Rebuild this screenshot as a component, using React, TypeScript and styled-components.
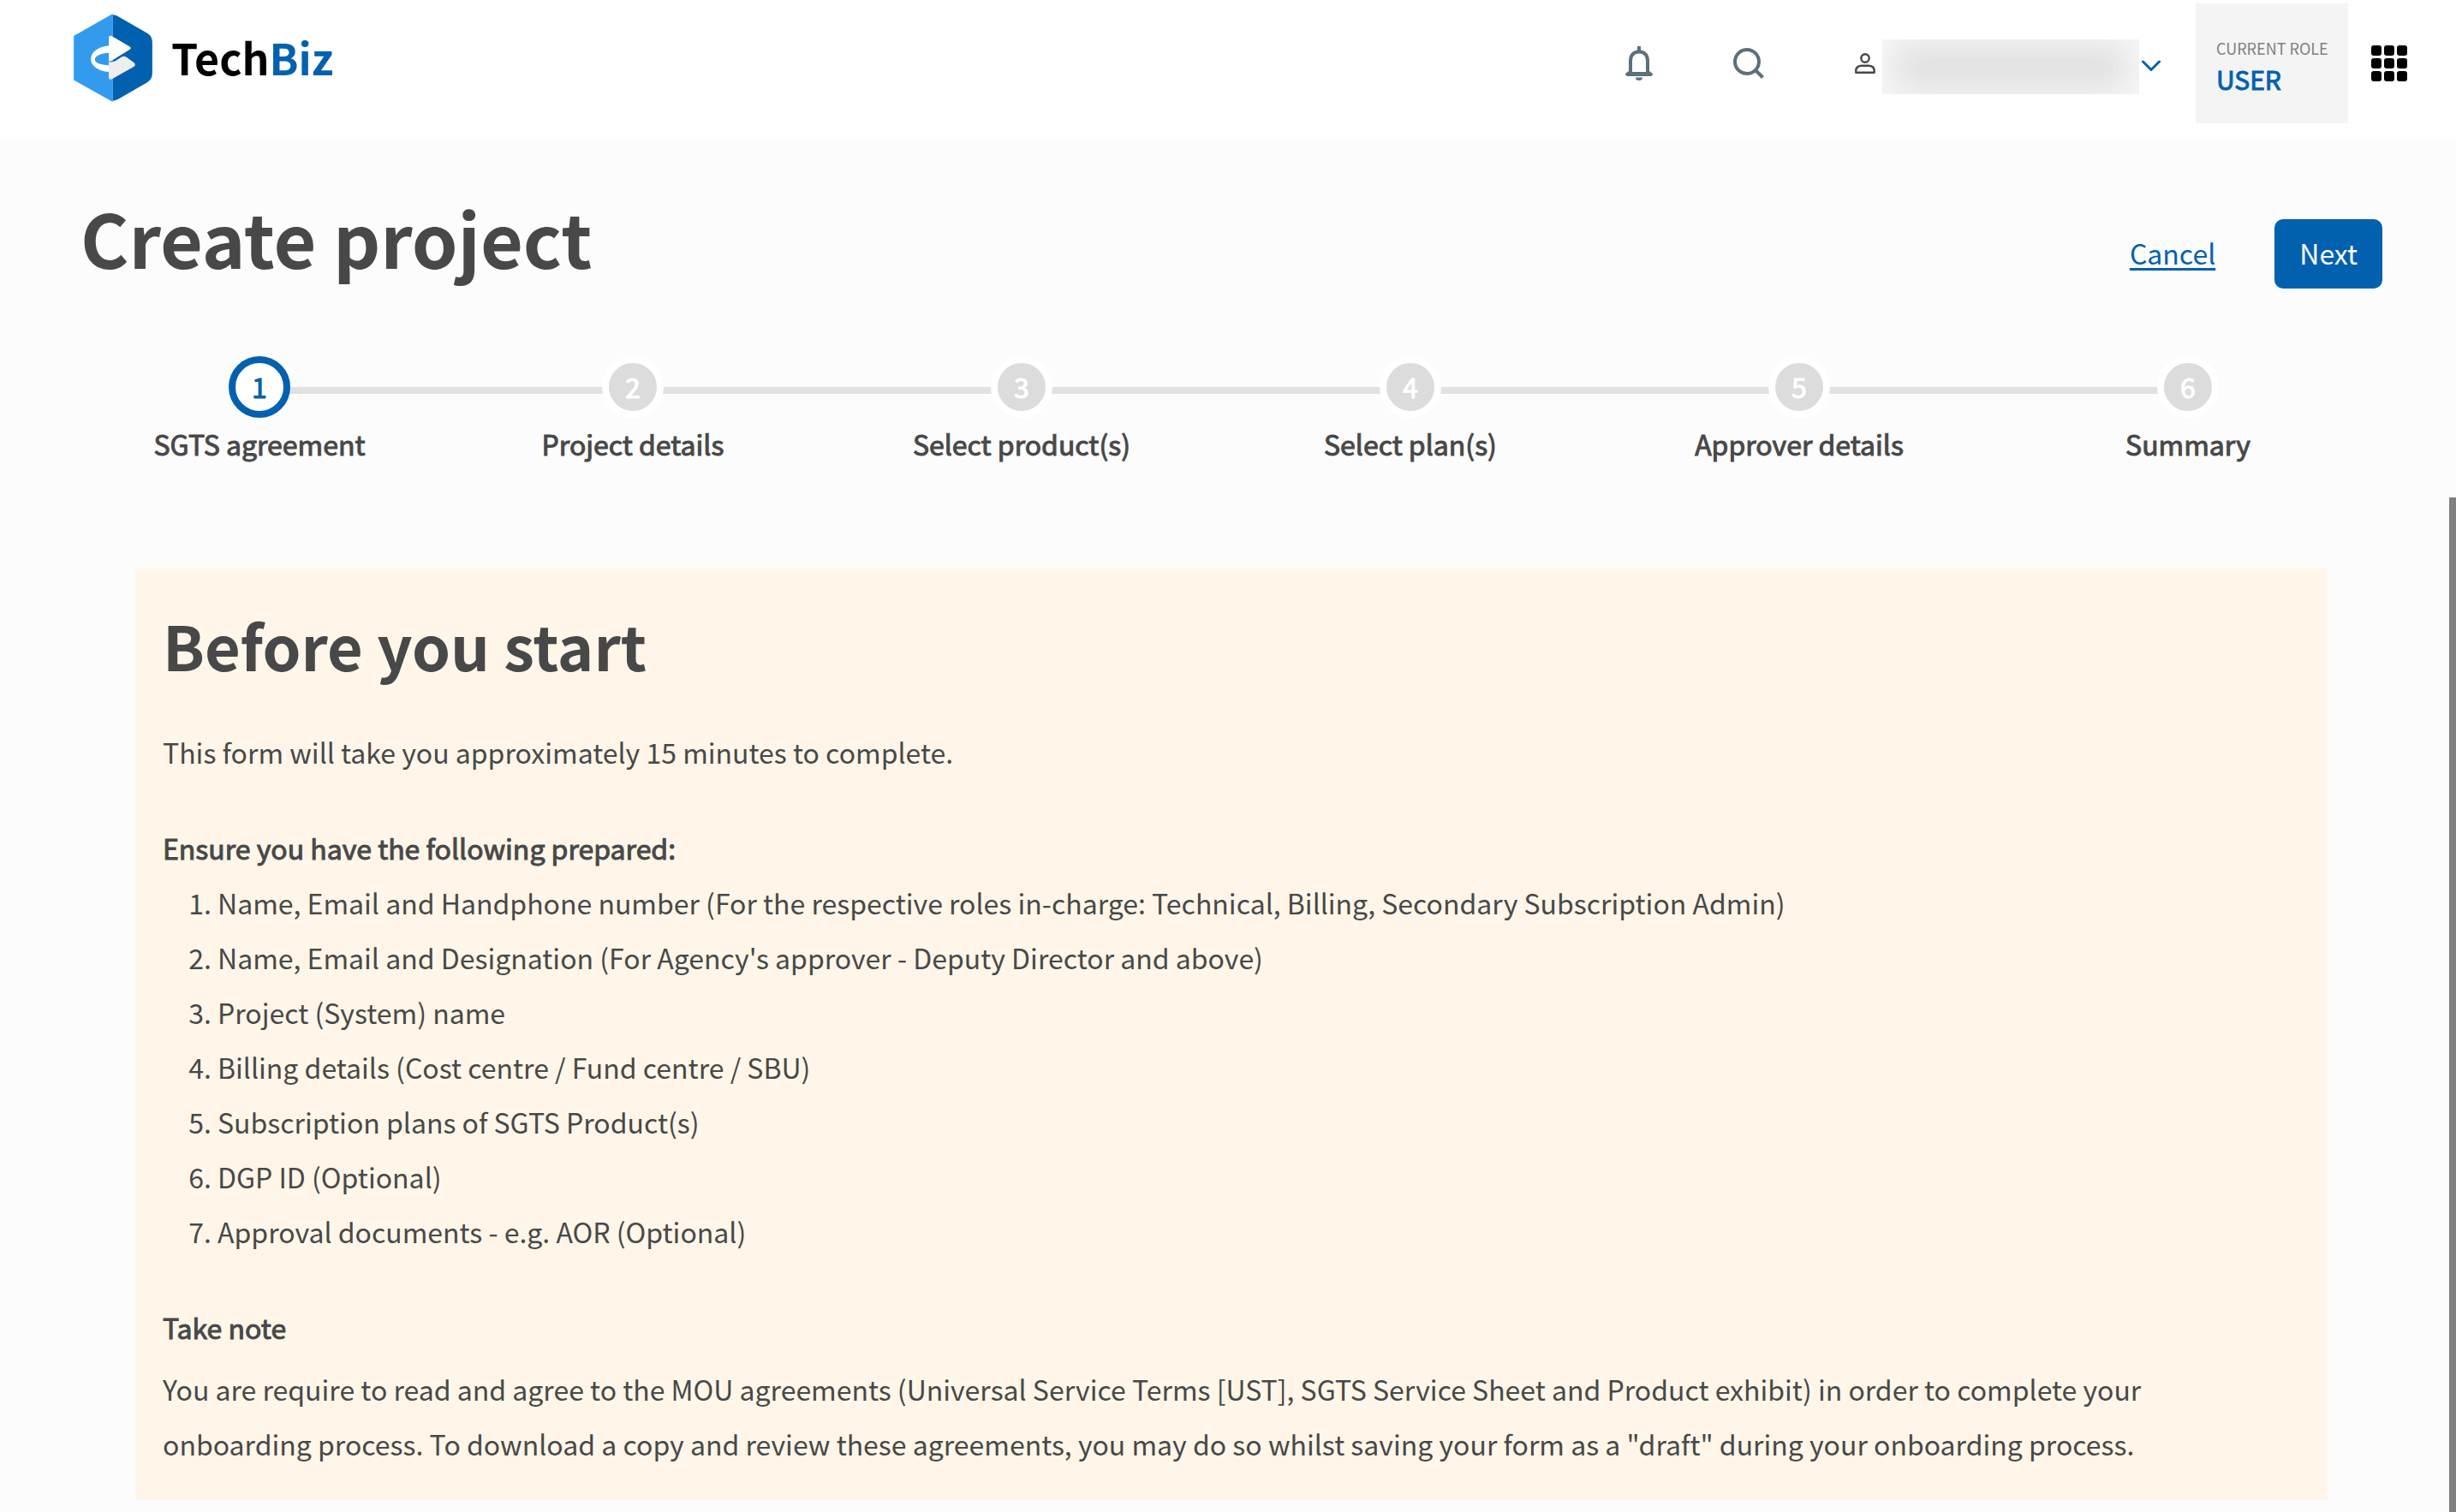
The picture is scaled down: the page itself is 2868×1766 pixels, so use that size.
import React from "react";
import styled, { createGlobalStyle, css } from "styled-components";

const blue = "#0161af";
const ink = "#484848";

const GlobalStyle = createGlobalStyle`
  *, *::before, *::after { box-sizing: border-box; }
  body {
    margin: 0;
    background: #fcfcfc;
    color: ${ink};
    font-family: "Noto Sans CJK SC", "Noto Sans", sans-serif;
    font-size: 32px;
    line-height: 64px;
  }
  h1, h2, p, ol { margin: 0; padding: 0; }
  button, a { font: inherit; color: inherit; }
  svg { display: block; }
`;

/* Thickens the regular cut, keeping its letter widths. */
const semiBold = css`
  font-weight: 400;
  -webkit-text-stroke: 1px currentColor;
`;

const Page = styled.div`
  position: relative;
  min-height: 100vh;
`;

const Header = styled.header`
  display: flex;
  align-items: center;
  justify-content: space-between;
  padding: 4px 57px 16px 86px;
  background: #fff;
`;

const Brand = styled.a`
  display: flex;
  align-self: flex-start;
  align-items: center;
  gap: 22px;
  margin-top: 12px;
  color: #000;
  font-size: 50px;
  font-weight: 700;
  text-decoration: none;
`;

const BrandName = styled.span`
  padding-bottom: 4px;
`;

const BrandAccent = styled.span`
  color: ${blue};
`;

const Tools = styled.div`
  display: flex;
  align-items: center;
`;

const IconButton = styled.button<{ $gap: number }>`
  display: flex;
  margin: 0 ${(p) => p.$gap}px 0 0;
  padding: 0;
  border: 0;
  background: none;
  cursor: pointer;
`;

const Account = styled.button`
  display: flex;
  align-items: center;
  margin: 0 41px 0 0;
  padding: 0;
  border: 0;
  background: none;
  cursor: pointer;
`;

const HiddenName = styled.span`
  width: 300px;
  height: 64px;
  margin: 8px 3px 0 8px;
  overflow: hidden;
  background: #f6f6f6;

  &::before {
    content: "";
    display: block;
    height: 48px;
    margin: 8px 16px;
    background: #dfdfdf;
    filter: blur(18px);
  }
`;

const Role = styled.div`
  display: flex;
  flex-direction: column;
  justify-content: center;
  width: 178px;
  height: 140px;
  margin-right: 27px;
  padding: 4px 0 0 24px;
  background: #f4f4f4;
  white-space: nowrap;
`;

const RoleLabel = styled.span`
  color: #808080;
  font-size: 18px;
  line-height: 32px;
`;

const RoleName = styled.span`
  color: ${blue};
  font-size: 30px;
  line-height: 40px;
  ${semiBold}
`;

const Main = styled.main`
  padding: 56px 86px 14px 94px;
`;

const TitleRow = styled.div`
  display: flex;
  align-items: flex-start;
  justify-content: space-between;
`;

const Title = styled.h1`
  font-size: 86px;
  font-weight: 700;
  line-height: 122px;
`;

const Actions = styled.div`
  display: flex;
  align-items: baseline;
  gap: 69px;
  margin-top: 40px;
`;

const CancelLink = styled.a`
  color: ${blue};
  text-decoration-thickness: 3px;
  text-underline-offset: 4px;
`;

const NextButton = styled.button`
  height: 81px;
  padding: 0 29px 4px;
  border: 0;
  border-radius: 10px;
  background: ${blue};
  color: #fff;
  cursor: pointer;
`;

const Stepper = styled.ol`
  display: flex;
  margin-top: 78px;
  list-style: none;
`;

const Step = styled.li`
  flex: 1 1 36px;
  text-align: center;

  &:first-child {
    flex-basis: 0;
  }
`;

const Track = styled.div`
  display: flex;
  align-items: center;
`;

const Line = styled.span<{ $shown: boolean }>`
  flex: 1;
  height: 8px;
  margin: 8px -2px 0;
  background: ${(p) => (p.$shown ? "#dfe1e2" : "transparent")};
`;

const Circle = styled.span<{ $active: boolean }>`
  z-index: 1;
  display: flex;
  align-items: center;
  justify-content: center;
  width: 72px;
  height: 72px;
  padding-bottom: 2px;
  border: 8px solid ${(p) => (p.$active ? blue : "#fff")};
  border-radius: 50%;
  background: ${(p) => (p.$active ? "#fff" : "#dcdcdc")};
  color: ${(p) => (p.$active ? blue : "#fff")};
  ${semiBold}
`;

const StepLabel = styled.div`
  margin-top: 6px;
  line-height: 48px;
  ${semiBold}
`;

const Notice = styled.section`
  margin: 122px 64px 0;
  padding: 33px 48px 34px 32px;
  background: #fff6e9;
`;

const NoticeTitle = styled.h2`
  margin-bottom: 37px;
  font-size: 72px;
  font-weight: 700;
  line-height: 112px;
`;

const Lead = styled.p`
  margin-bottom: 48px;
`;

const Strong = styled.p<{ $gap: number }>`
  margin-bottom: ${(p) => p.$gap}px;
  ${semiBold}
`;

const Checklist = styled.ol`
  margin-bottom: 48px;
  padding-left: 64px;
`;

const ScrollThumb = styled.div`
  position: absolute;
  top: 581px;
  right: 0;
  bottom: 0;
  width: 8px;
  background: #808080;
`;

const Logo = () => (
  <svg width="92" height="103" viewBox="0 0 276 310" aria-hidden="true">
    <path d="M137 0 0 78v155l137 77z" fill="#339bee" />
    <path
      d="M137 4q10 0 22 7l98 57q19 11 19 32v110q0 21-19 32l-98 57q-12 7-22 7z"
      fill={blue}
    />
    <path
      d="M123 170h10q8 0 15-5l20-13q8-5 16 0l28 20q7 7 0 14l-79 44q-8 3-10-4z"
      fill="#eee"
    />
    <path
      d="M123 84q1-9 10-6l64 38q6 5 0 10l-62 38q-5 3-12 3v-29c-27 2-49 10-49 23 0 12 22 19 49 20v24c-36-3-63-22-63-45 0-25 27-45 63-48z"
      fill="#fff"
    />
  </svg>
);

const Bell = () => (
  <svg width="32" height="40" viewBox="0 0 32 40" fill="none" aria-hidden="true">
    <path d="M16 1v5" stroke="#5d6f78" strokeWidth="4" strokeLinecap="round" />
    <path
      d="M6 32V17C6 10 10 6.500 16 6.500S26 10 26 17v15"
      stroke="#5d6f78"
      strokeWidth="4"
    />
    <path d="M4 29h24l4 3q0 3-3 3H3q-3 0-3-3z" fill="#5d6f78" />
    <path d="M8 26h16v4H8z" fill="#fff" />
    <path d="M12 36.500h8q0 3.500-4 3.500t-4-3.500z" fill="#5d6f78" />
  </svg>
);

const Search = () => (
  <svg width="36" height="36" viewBox="0 0 36 36" fill="none" aria-hidden="true">
    <circle cx="16" cy="16" r="14" stroke="#5d6f78" strokeWidth="4" />
    <path d="m26 26 8.500 8.500" stroke="#5d6f78" strokeWidth="4" />
  </svg>
);

const Person = () => (
  <svg width="24" height="24" viewBox="0 0 24 24" fill="none" stroke={ink} strokeWidth="2.400" aria-hidden="true">
    <circle cx="12" cy="6" r="4.700" />
    <path d="M1.300 22.700v-2q0-6 7-6h7.400q7 0 7 6v2z" strokeLinejoin="round" />
  </svg>
);

const Chevron = () => (
  <svg width="22" height="19" viewBox="0 -5 22 19" fill="none" aria-hidden="true">
    <path d="m1.500 2 9.500 9.500L20.500 2" stroke={blue} strokeWidth="3" strokeLinecap="round" />
  </svg>
);

const AppGrid = () => (
  <svg width="42" height="42" viewBox="0 0 42 42" aria-hidden="true">
    {[0, 15, 30].map((y) =>
      [0, 15, 30].map((x) => (
        <rect key={`${x}-${y}`} x={x} y={y} width="12" height="12" rx="3" />
      ))
    )}
  </svg>
);

const steps = [
  "SGTS agreement",
  "Project details",
  "Select product(s)",
  "Select plan(s)",
  "Approver details",
  "Summary",
];

const requirements = [
  "Name, Email and Handphone number (For the respective roles in-charge: Technical, Billing, Secondary Subscription Admin)",
  "Name, Email and Designation (For Agency's approver - Deputy Director and above)",
  "Project (System) name",
  "Billing details (Cost centre / Fund centre / SBU)",
  "Subscription plans of SGTS Product(s)",
  "DGP ID (Optional)",
  "Approval documents - e.g. AOR (Optional)",
];

export default function App() {
  const current = 0;

  return (
    <Page>
      <GlobalStyle />
      <Header>
        <Brand href="#">
          <Logo />
          <BrandName>
            Tech<BrandAccent>Biz</BrandAccent>
          </BrandName>
        </Brand>
        <Tools>
          <IconButton $gap={94} type="button" aria-label="Notifications">
            <Bell />
          </IconButton>
          <IconButton $gap={106} type="button" aria-label="Search">
            <Search />
          </IconButton>
          <Account type="button" aria-label="Account">
            <Person />
            <HiddenName />
            <Chevron />
          </Account>
          <Role>
            <RoleLabel>CURRENT ROLE</RoleLabel>
            <RoleName>USER</RoleName>
          </Role>
          <IconButton $gap={0} type="button" aria-label="Apps">
            <AppGrid />
          </IconButton>
        </Tools>
      </Header>
      <Main>
        <TitleRow>
          <Title>Create project</Title>
          <Actions>
            <CancelLink href="#">Cancel</CancelLink>
            <NextButton type="button">Next</NextButton>
          </Actions>
        </TitleRow>
        <Stepper>
          {steps.map((label, i) => (
            <Step key={label} aria-current={i === current ? "step" : undefined}>
              <Track>
                <Line $shown={i > 0} />
                <Circle $active={i === current}>{i + 1}</Circle>
                <Line $shown={i < steps.length - 1} />
              </Track>
              <StepLabel>{label}</StepLabel>
            </Step>
          ))}
        </Stepper>
        <Notice>
          <NoticeTitle>Before you start</NoticeTitle>
          <Lead>This form will take you approximately 15 minutes to complete.</Lead>
          <Strong $gap={0}>Ensure you have the following prepared:</Strong>
          <Checklist>
            {requirements.map((text) => (
              <li key={text}>{text}</li>
            ))}
          </Checklist>
          <Strong $gap={8}>Take note</Strong>
          <p>
            You are require to read and agree to the MOU agreements (Universal Service Terms [UST],
            SGTS Service Sheet and Product exhibit) in order to complete your onboarding process. To
            download a copy and review these agreements, you may do so whilst saving your form as a
            "draft" during your onboarding process.
          </p>
        </Notice>
      </Main>
      <ScrollThumb />
    </Page>
  );
}
